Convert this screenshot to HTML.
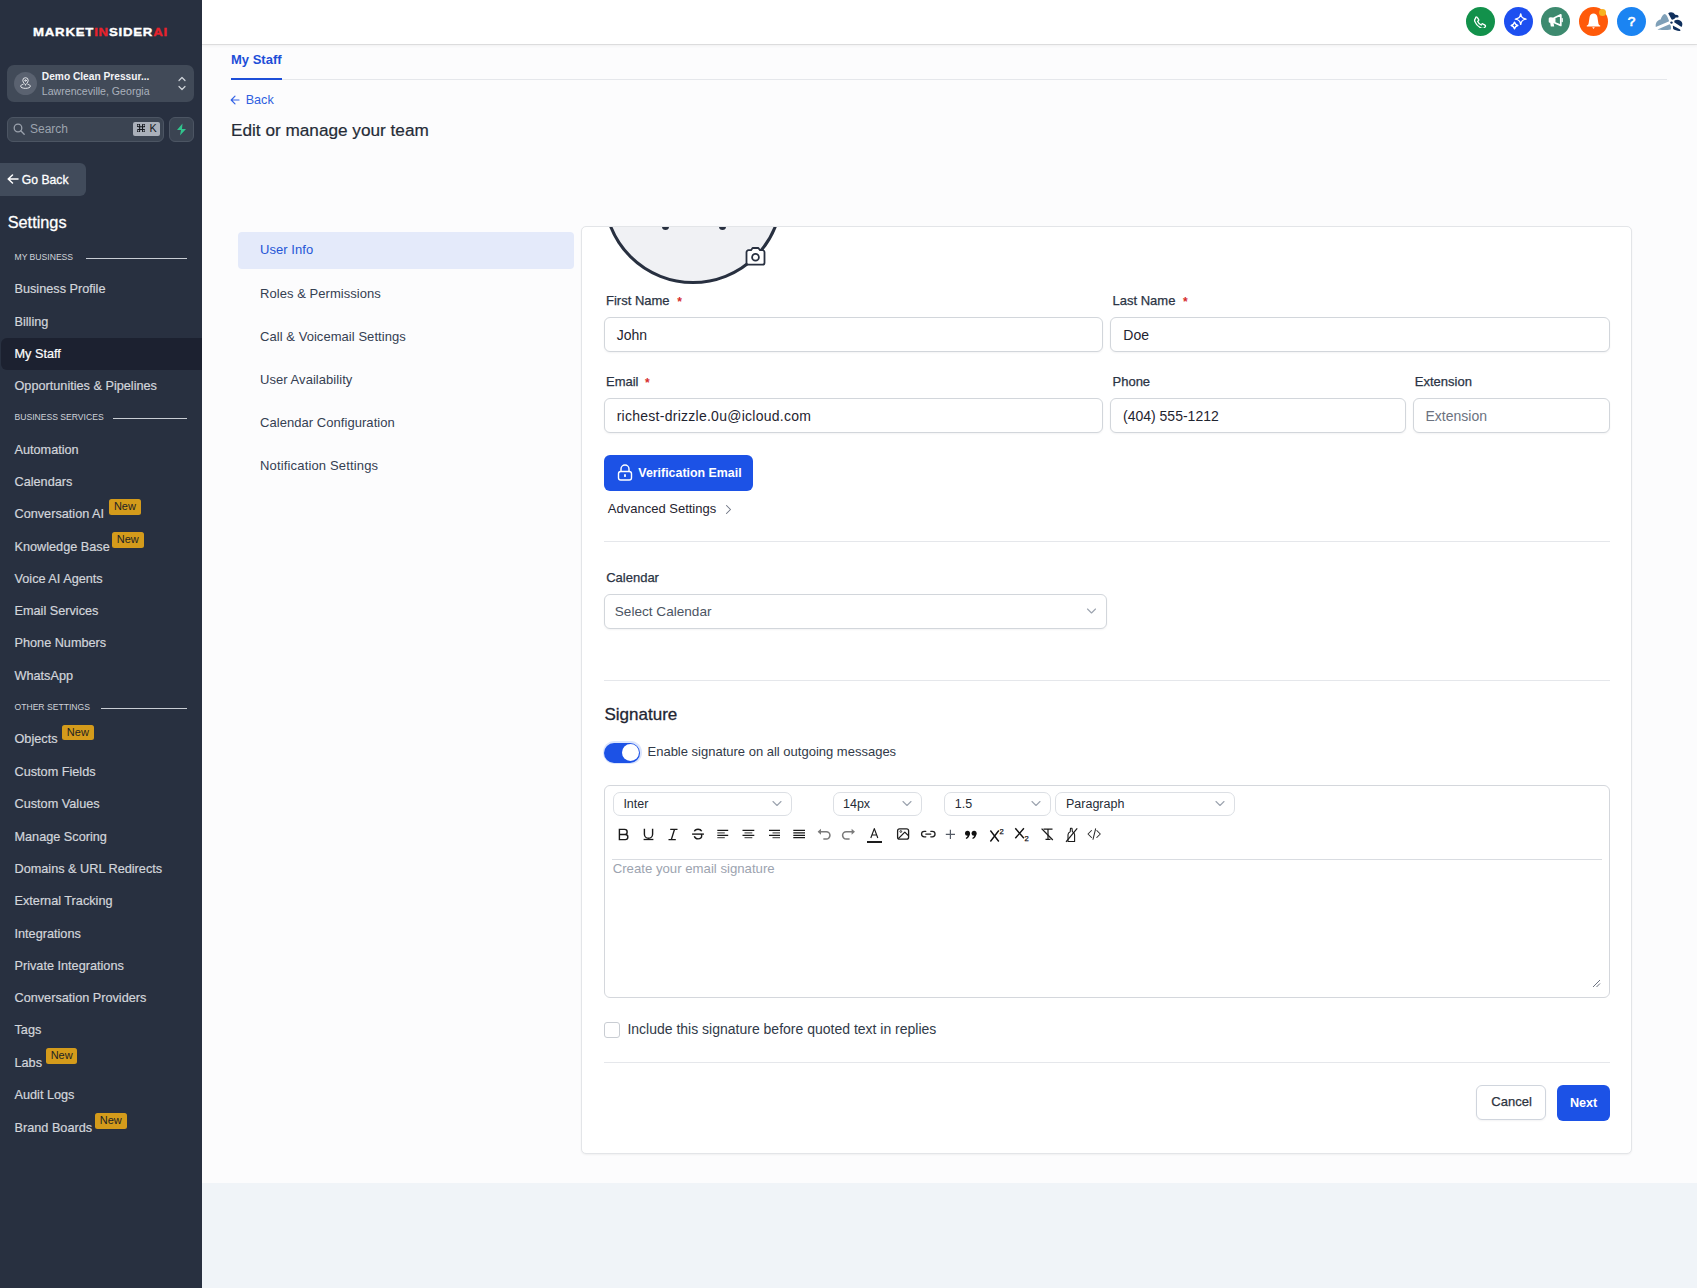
<!DOCTYPE html><html><head><meta charset="utf-8"><style>*{box-sizing:border-box;margin:0;padding:0}
html,body{width:1697px;height:1288px;overflow:hidden;font-family:"Liberation Sans",sans-serif;background:#f9fafb;position:relative}
.a{position:absolute}
.t{position:absolute;white-space:nowrap;line-height:1}
#sb{position:absolute;left:0;top:0;width:202px;height:1288px;background:#283040;overflow:hidden}
.nb{position:absolute;height:15.5px;width:31.5px;background:#d49b1b;border-radius:2.5px;color:#1d1f24;font-size:11px;line-height:15.5px;text-align:center;white-space:nowrap}
#top{position:absolute;left:202px;top:0;width:1495px;height:44px;background:#fff;box-shadow:0 1px 0 rgba(0,0,0,0.09),0 2px 3px rgba(0,0,0,0.05)}
.ic{position:absolute;top:7px;width:29px;height:29px;border-radius:50%}
.inp{position:absolute;height:35px;background:#fff;border:1px solid #d2d6db;border-radius:6px;box-shadow:0 1px 2px rgba(16,24,40,0.05)}
.hr{position:absolute;height:1px;background:#e5e7eb}
.sel{position:absolute;height:24px;background:#fff;border:1px solid #dcdfe4;border-radius:7px}
</style></head><body><div id="sb"><div class="t" style="left:33px;top:27.0px;font-size:11px;color:#fff;font-weight:bold;letter-spacing:0.65px;transform:scaleX(1.2);transform-origin:0 0;-webkit-text-stroke:0.35px currentColor">MARKET<span style="color:#e8222c;-webkit-text-stroke:0.35px #e8222c">IN</span>SIDER<span style="color:#e8222c;-webkit-text-stroke:0.35px #e8222c">AI</span></div><div class="a" style="left:7px;top:65px;width:187px;height:37px;background:#414a58;border-radius:7px"></div><div class="a" style="left:14px;top:72px;width:23px;height:23px;border-radius:50%;background:#5a6270"></div><svg class="a" style="left:19px;top:77px" width="13" height="13" viewBox="0 0 24 24" fill="none" stroke="#e8eaee" stroke-width="1.8" stroke-linecap="round" stroke-linejoin="round"><path d="M12 14.5s5-4.2 5-8.2a5 5 0 0 0-10 0c0 4 5 8.2 5 8.2z"/><circle cx="12" cy="6.5" r="1.4"/><path d="M7.5 13.5C4.5 14.3 3 15.5 3 17c0 2.2 4 4 9 4s9-1.8 9-4c0-1.5-1.5-2.7-4.5-3.5"/></svg><div class="t" style="left:41.8px;top:72.0px;font-size:10.2px;color:#f3f4f6;font-weight:bold;">Demo Clean Pressur...</div><div class="t" style="left:41.8px;top:86.0px;font-size:10.6px;color:#aab1bc;font-weight:normal;">Lawrenceville, Georgia</div><svg class="a" style="left:177px;top:76px" width="10" height="15" viewBox="0 0 10 15" fill="none" stroke="#d0d4da" stroke-width="1.2" stroke-linecap="round" stroke-linejoin="round"><path d="M2 4.5l3-3 3 3"/><path d="M2 10.5l3 3 3-3"/></svg><div class="a" style="left:7px;top:117px;width:157px;height:25px;background:#3b4452;border:1px solid #4c5563;border-radius:6px"></div><svg class="a" style="left:13px;top:123px" width="12" height="12" viewBox="0 0 12 12" fill="none" stroke="#9aa1ac" stroke-width="1.3" stroke-linecap="round"><circle cx="5" cy="5" r="3.8"/><path d="M8 8l3.2 3.2"/></svg><div class="t" style="left:30px;top:123.0px;font-size:12px;color:#9ca3ae;font-weight:normal;">Search</div><div class="a" style="left:133px;top:122px;width:27px;height:14px;background:#aab0ba;border-radius:2px"></div><svg class="a" style="left:137.2px;top:123.9px" width="8.2" height="8.2" viewBox="0 0 8 8" fill="none" stroke="#15181e" stroke-width="1"><path d="M1.3 2.6A1.3 1.3 0 1 1 2.6 1.3V6.7A1.3 1.3 0 1 1 1.3 5.4H6.7A1.3 1.3 0 1 1 5.4 6.7V1.3A1.3 1.3 0 1 1 6.7 2.6Z"/></svg><div class="t" style="left:149.6px;top:123.0px;font-size:10.8px;color:#15181e;font-weight:normal;">K</div><div class="a" style="left:169px;top:117px;width:25px;height:25px;background:#3b4452;border:1px solid #4c5563;border-radius:6px"></div><svg class="a" style="left:176px;top:123px" width="11" height="13" viewBox="0 0 11 13"><path d="M6.5 0.5L1 7h4l-1 5.5L10 6H6z" fill="#31c48d"/></svg><div class="a" style="left:-6px;top:163px;width:92px;height:33px;background:#414b5b;border-radius:6px"></div><svg class="a" style="left:7px;top:174px" width="12" height="10" viewBox="0 0 12 10" fill="none" stroke="#fff" stroke-width="1.5" stroke-linecap="round" stroke-linejoin="round"><path d="M11 5H1.5M5.5 1L1.2 5l4.3 4"/></svg><div class="t" style="left:21.8px;top:174.0px;font-size:12.2px;color:#fff;font-weight:normal;-webkit-text-stroke:0.3px currentColor">Go Back</div><div class="t" style="left:7.7px;top:214.0px;font-size:16.3px;color:#fff;font-weight:normal;-webkit-text-stroke:0.3px currentColor">Settings</div><div class="t" style="left:14.5px;top:253.0px;font-size:8.6px;color:#cfd3da;font-weight:normal;">MY BUSINESS</div><div class="a" style="left:86px;top:257.8px;width:101px;height:1.3px;background:#c9cdd4"></div><div class="a" style="left:1px;top:338px;width:201px;height:32px;background:#1c2130;border-radius:6px 0 0 6px"></div><div class="t" style="left:14.5px;top:283.0px;font-size:12.7px;color:#d2d5db;font-weight:normal;-webkit-text-stroke:0.2px currentColor">Business Profile</div><div class="t" style="left:14.5px;top:316.0px;font-size:12.7px;color:#d2d5db;font-weight:normal;-webkit-text-stroke:0.2px currentColor">Billing</div><div class="t" style="left:14.5px;top:348.0px;font-size:12.7px;color:#ffffff;font-weight:normal;-webkit-text-stroke:0.2px currentColor">My Staff</div><div class="t" style="left:14.5px;top:380.0px;font-size:12.7px;color:#d2d5db;font-weight:normal;-webkit-text-stroke:0.2px currentColor">Opportunities &amp; Pipelines</div><div class="t" style="left:14.5px;top:413.0px;font-size:8.6px;color:#cfd3da;font-weight:normal;">BUSINESS SERVICES</div><div class="a" style="left:113px;top:417.6px;width:74px;height:1.3px;background:#c9cdd4"></div><div class="t" style="left:14.5px;top:703.0px;font-size:8.6px;color:#cfd3da;font-weight:normal;">OTHER SETTINGS</div><div class="a" style="left:101px;top:707.9px;width:86px;height:1.3px;background:#c9cdd4"></div><div class="t" style="left:14.5px;top:444.0px;font-size:12.7px;color:#d2d5db;font-weight:normal;-webkit-text-stroke:0.2px currentColor">Automation</div><div class="t" style="left:14.5px;top:476.0px;font-size:12.7px;color:#d2d5db;font-weight:normal;-webkit-text-stroke:0.2px currentColor">Calendars</div><div class="t" style="left:14.5px;top:508.0px;font-size:12.7px;color:#d2d5db;font-weight:normal;-webkit-text-stroke:0.2px currentColor">Conversation AI</div><div class="nb" style="left:109.2px;top:499.2px">New</div><div class="t" style="left:14.5px;top:541.0px;font-size:12.7px;color:#d2d5db;font-weight:normal;-webkit-text-stroke:0.2px currentColor">Knowledge Base</div><div class="nb" style="left:112px;top:532.2px">New</div><div class="t" style="left:14.5px;top:573.0px;font-size:12.7px;color:#d2d5db;font-weight:normal;-webkit-text-stroke:0.2px currentColor">Voice AI Agents</div><div class="t" style="left:14.5px;top:605.0px;font-size:12.7px;color:#d2d5db;font-weight:normal;-webkit-text-stroke:0.2px currentColor">Email Services</div><div class="t" style="left:14.5px;top:637.0px;font-size:12.7px;color:#d2d5db;font-weight:normal;-webkit-text-stroke:0.2px currentColor">Phone Numbers</div><div class="t" style="left:14.5px;top:670.0px;font-size:12.7px;color:#d2d5db;font-weight:normal;-webkit-text-stroke:0.2px currentColor">WhatsApp</div><div class="t" style="left:14.5px;top:733.0px;font-size:12.7px;color:#d2d5db;font-weight:normal;-webkit-text-stroke:0.2px currentColor">Objects</div><div class="nb" style="left:62.1px;top:724.7px">New</div><div class="t" style="left:14.5px;top:766.0px;font-size:12.7px;color:#d2d5db;font-weight:normal;-webkit-text-stroke:0.2px currentColor">Custom Fields</div><div class="t" style="left:14.5px;top:798.0px;font-size:12.7px;color:#d2d5db;font-weight:normal;-webkit-text-stroke:0.2px currentColor">Custom Values</div><div class="t" style="left:14.5px;top:831.0px;font-size:12.7px;color:#d2d5db;font-weight:normal;-webkit-text-stroke:0.2px currentColor">Manage Scoring</div><div class="t" style="left:14.5px;top:863.0px;font-size:12.7px;color:#d2d5db;font-weight:normal;-webkit-text-stroke:0.2px currentColor">Domains &amp; URL Redirects</div><div class="t" style="left:14.5px;top:895.0px;font-size:12.7px;color:#d2d5db;font-weight:normal;-webkit-text-stroke:0.2px currentColor">External Tracking</div><div class="t" style="left:14.5px;top:928.0px;font-size:12.7px;color:#d2d5db;font-weight:normal;-webkit-text-stroke:0.2px currentColor">Integrations</div><div class="t" style="left:14.5px;top:960.0px;font-size:12.7px;color:#d2d5db;font-weight:normal;-webkit-text-stroke:0.2px currentColor">Private Integrations</div><div class="t" style="left:14.5px;top:992.0px;font-size:12.7px;color:#d2d5db;font-weight:normal;-webkit-text-stroke:0.2px currentColor">Conversation Providers</div><div class="t" style="left:14.5px;top:1024.0px;font-size:12.7px;color:#d2d5db;font-weight:normal;-webkit-text-stroke:0.2px currentColor">Tags</div><div class="t" style="left:14.5px;top:1057.0px;font-size:12.7px;color:#d2d5db;font-weight:normal;-webkit-text-stroke:0.2px currentColor">Labs</div><div class="nb" style="left:45.9px;top:1048.2px">New</div><div class="t" style="left:14.5px;top:1089.0px;font-size:12.7px;color:#d2d5db;font-weight:normal;-webkit-text-stroke:0.2px currentColor">Audit Logs</div><div class="t" style="left:14.5px;top:1122.0px;font-size:12.7px;color:#d2d5db;font-weight:normal;-webkit-text-stroke:0.2px currentColor">Brand Boards</div><div class="nb" style="left:95px;top:1113.0px">New</div></div><div class="a" style="left:202px;top:44px;width:1495px;height:1139px;background:#fcfcfd"></div><div class="a" style="left:202px;top:1183px;width:1495px;height:105px;background:#f0f4f8"></div><div id="top"></div><div class="ic" style="left:1466px;background:#12914b"></div><div class="ic" style="left:1504px;background:#1d4ff0"></div><div class="ic" style="left:1541px;background:#3d8a6f"></div><div class="ic" style="left:1579px;background:#ff5a0a"></div><div class="ic" style="left:1617px;background:#1b84f2"></div><svg class="a" style="left:1473.3px;top:15.6px" width="13.6" height="12.75" viewBox="0 0 16 15" fill="none" stroke="#fff" stroke-width="1.55" stroke-linecap="round" stroke-linejoin="round"><path d="M3.2 1.6c.7-.6 1.6-.5 2 .2l1.3 2.1c.4.6.2 1.4-.3 1.8l-.8.6c.8 1.9 2.3 3.5 4.2 4.3l.6-.8c.4-.6 1.2-.7 1.8-.3l2.1 1.3c.7.4.8 1.3.2 2l-.8.9c-.9.9-2.3 1.2-3.4.7C6.6 12.9 3.7 10 2.2 6.4 1.7 5.3 2 3.9 2.9 3z"/></svg><svg class="a" style="left:1500px;top:5px" width="36" height="33" viewBox="0 0 36 33" fill="none" stroke="#fff" stroke-width="1.45" stroke-linejoin="round"><path d="M20.7 8.9C21.2 12.2 22.2 13.4 26 14.1 22.2 14.8 21.2 16 20.7 19.3 20.2 16 19.2 14.8 15.4 14.1 19.2 13.4 20.2 12.2 20.7 8.9z"/><path d="M14.5 17.2C15 19.3 15.7 20 17.8 20.5 15.7 21 15 21.7 14.5 23.8 14 21.7 13.3 21 11.2 20.5 13.3 20 14 19.3 14.5 17.2z"/></svg><svg class="a" style="left:1540px;top:5px" width="30" height="30" viewBox="0 0 30 30"><path d="M10.2 12.4h4.6v5.6h-1.2l.6 3.6h-3.4l-.6-3.6v-5.6z" fill="#fff"/><path d="M9.8 12.6h1.8v5.2H9.8a1.1 1.1 0 0 1-1.1-1.1v-3a1.1 1.1 0 0 1 1.1-1.1z" fill="#fff"/><path d="M14.6 12.8l6.2-3v10.6l-6.2-2.7z" fill="none" stroke="#fff" stroke-width="1.75" stroke-linejoin="round"/><path d="M22.2 13.6v3" stroke="#fff" stroke-width="1.3" stroke-linecap="round"/></svg><svg class="a" style="left:1580px;top:5px" width="28" height="28" viewBox="0 0 28 28" fill="#fff"><path d="M13.5 8.4c-2.1 0-3.5 1.5-3.9 3.5L8.6 18.5c-.3 1.3-1 1.8-1.8 2v.9h13.4v-.9c-.8-.2-1.5-.7-1.8-2l-1-6.6c-.4-2-1.8-3.5-3.9-3.5z"/><path d="M12.2 22.3h2.6l-1.3 1.6z"/></svg><div class="a" style="left:1599px;top:9px;width:7px;height:7px;border-radius:50%;background:#f7b21f"></div><div class="t" style="left:1627.8px;top:15.0px;font-size:13.6px;color:#fff;font-weight:normal;-webkit-text-stroke:0.7px #fff">?</div><svg class="a" style="left:1650px;top:5px" width="40" height="30" viewBox="0 0 40 30">
<path d="M5.8 22C5.2 18.5 7 15.2 10.6 14.6C11.5 11.5 13.2 9 14.8 9C16 9.2 17.5 11 19.2 16.2Z" fill="#7fa0b8"/>
<path d="M7.5 24.6L19.6 19.2C21 20.5 21.5 22.5 20.8 24.5C17 25.2 11 25.2 7.5 24.6Z" fill="#7fa0b8"/>
<path d="M18.2 8.2C19.8 6.6 23.6 6.6 25.2 9.8L27.4 10C28.6 10.3 28.9 11.6 28.2 12.4L25.6 12.6C24.6 14.2 22.8 14.9 21.6 14.6Z" fill="#0f2f5c"/>
<path d="M24.5 15.6c2.6-1.6 6-1 7.4 1.6.8 1.5.4 3.3-.4 4.8l-7.3-4.7z" fill="#0f2f5c"/>
<path d="M22.8 20.4l7.3 4.1.3 1.4c-2.7.3-5.6-.5-7.2-1.8z" fill="#0f2f5c"/>
<circle cx="21.5" cy="17.6" r="1.2" fill="#0f2f5c"/>
</svg><div class="t" style="left:231px;top:53.0px;font-size:13px;color:#1d4ed8;font-weight:bold;">My Staff</div><div class="a" style="left:231px;top:78.8px;width:1436px;height:1px;background:#e5e7eb"></div><div class="a" style="left:231px;top:78px;width:51px;height:2px;background:#1d4ed8"></div><svg class="a" style="left:230px;top:95px" width="10" height="10" viewBox="0 0 10 10" fill="none" stroke="#3463e6" stroke-width="1.2" stroke-linecap="round" stroke-linejoin="round"><path d="M9 5H1.5M5 1.2L1.2 5 5 8.8"/></svg><div class="t" style="left:245.7px;top:94.0px;font-size:12.6px;color:#2f5fe0;font-weight:normal;">Back</div><div class="t" style="left:231px;top:122.0px;font-size:17.2px;color:#252b36;font-weight:normal;-webkit-text-stroke:0.2px currentColor">Edit or manage your team</div><div class="a" style="left:238px;top:232px;width:336px;height:36.5px;background:#e4eafa;border-radius:4px"></div><div class="t" style="left:260px;top:243.0px;font-size:13px;color:#2556d6;font-weight:normal;letter-spacing:0.05px">User Info</div><div class="t" style="left:260px;top:287.0px;font-size:13px;color:#354052;font-weight:normal;letter-spacing:0.05px">Roles &amp; Permissions</div><div class="t" style="left:260px;top:330.0px;font-size:13px;color:#354052;font-weight:normal;letter-spacing:0.05px">Call &amp; Voicemail Settings</div><div class="t" style="left:260px;top:373.0px;font-size:13px;color:#354052;font-weight:normal;letter-spacing:0.05px">User Availability</div><div class="t" style="left:260px;top:416.0px;font-size:13px;color:#354052;font-weight:normal;letter-spacing:0.05px">Calendar Configuration</div><div class="t" style="left:260px;top:459.0px;font-size:13px;color:#354052;font-weight:normal;letter-spacing:0.16px">Notification Settings</div><div class="a" style="left:581px;top:226px;width:1051px;height:928px;background:#fff;border:1px solid #e3e5e8;border-radius:5px;overflow:hidden;box-shadow:0 1px 2px rgba(0,0,0,0.05)"><div class="a" style="left:21px;top:-123.5px;width:180px;height:180px;border-radius:50%;background:#f0f1f4;border:3px solid #283040"></div><div class="a" style="left:80.20000000000005px;top:-1px;width:6.8px;height:3.6px;border-radius:0 0 3.5px 3.5px;background:#283040"></div><div class="a" style="left:137.29999999999995px;top:-1px;width:6.8px;height:3.6px;border-radius:0 0 3.5px 3.5px;background:#283040"></div><svg class="a" style="left:163px;top:20px" width="21" height="20" viewBox="0 0 21 20"><path d="M6 3.2L7.6 1h5.8L15 3.2h2.5a2 2 0 0 1 2 2v10.5a2 2 0 0 1-2 2h-14a2 2 0 0 1-2-2V5.2a2 2 0 0 1 2-2z" fill="#fff" stroke="#283040" stroke-width="1.8" stroke-linejoin="round"/><circle cx="10.5" cy="10.2" r="3.4" fill="none" stroke="#283040" stroke-width="1.8"/></svg></div><div class="t" style="left:606px;top:294.0px;font-size:13px;color:#2b3444;font-weight:normal;-webkit-text-stroke:0.25px currentColor">First Name</div><div class="t" style="left:677.2px;top:296.0px;font-size:12px;color:#d62c2c;font-weight:bold;">*</div><div class="inp" style="left:604px;top:317px;width:499px"></div><div class="t" style="left:616.7px;top:328.0px;font-size:14px;color:#1f2430;font-weight:normal;">John</div><div class="t" style="left:1112.5px;top:294.0px;font-size:13px;color:#2b3444;font-weight:normal;-webkit-text-stroke:0.25px currentColor">Last Name</div><div class="t" style="left:1183px;top:296.0px;font-size:12px;color:#d62c2c;font-weight:bold;">*</div><div class="inp" style="left:1110px;top:317px;width:500px"></div><div class="t" style="left:1123.3px;top:328.0px;font-size:14px;color:#1f2430;font-weight:normal;">Doe</div><div class="t" style="left:606px;top:375.0px;font-size:13px;color:#2b3444;font-weight:normal;-webkit-text-stroke:0.25px currentColor">Email</div><div class="t" style="left:645px;top:377.0px;font-size:12px;color:#d62c2c;font-weight:bold;">*</div><div class="inp" style="left:604px;top:398px;width:499px"></div><div class="t" style="left:616.7px;top:409.0px;font-size:14px;color:#1f2430;font-weight:normal;letter-spacing:0.26px">richest-drizzle.0u@icloud.com</div><div class="t" style="left:1112.5px;top:375.0px;font-size:13px;color:#2b3444;font-weight:normal;-webkit-text-stroke:0.25px currentColor">Phone</div><div class="inp" style="left:1110px;top:398px;width:296px"></div><div class="t" style="left:1123px;top:409.0px;font-size:14px;color:#1f2430;font-weight:normal;">(404) 555-1212</div><div class="t" style="left:1414.8px;top:375.0px;font-size:13px;color:#2b3444;font-weight:normal;-webkit-text-stroke:0.25px currentColor">Extension</div><div class="inp" style="left:1413px;top:398px;width:197px"></div><div class="t" style="left:1425.5px;top:409.0px;font-size:14px;color:#6b7280;font-weight:normal;">Extension</div><div class="a" style="left:604px;top:455px;width:149px;height:36px;background:#1c52e6;border-radius:6px"></div><svg class="a" style="left:617px;top:464px" width="16" height="17" viewBox="0 0 16 17" fill="none" stroke="#fff" stroke-width="1.4" stroke-linejoin="round"><path d="M4 7.5V5a4 4 0 0 1 8 0v2.5"/><rect x="1.5" y="7.5" width="13" height="8.5" rx="2.2"/><path d="M8 11v1.2" stroke-linecap="round" stroke-width="1.8"/></svg><div class="t" style="left:638.3px;top:467.0px;font-size:12.4px;color:#fff;font-weight:bold;">Verification Email</div><div class="t" style="left:607.8px;top:502.0px;font-size:13px;color:#1f2430;font-weight:normal;">Advanced Settings</div><svg class="a" style="left:724px;top:504px" width="9" height="11" viewBox="0 0 9 11" fill="none" stroke="#6b7280" stroke-width="1.05" stroke-linecap="round" stroke-linejoin="round"><path d="M2.5 1.5l4 4-4 4"/></svg><div class="hr" style="left:604px;top:540.5px;width:1006px"></div><div class="t" style="left:606.2px;top:571.0px;font-size:13px;color:#2b3444;font-weight:normal;-webkit-text-stroke:0.25px currentColor">Calendar</div><div class="inp" style="left:604px;top:593.5px;width:503px"></div><div class="t" style="left:614.8px;top:605.0px;font-size:13.6px;color:#4b5563;font-weight:normal;">Select Calendar</div><svg class="a" style="left:1086px;top:607px" width="11" height="8" viewBox="0 0 11 8" fill="none" stroke="#9ca3af" stroke-width="1.1" stroke-linecap="round" stroke-linejoin="round"><path d="M1.5 2l4 4 4-4"/></svg><div class="hr" style="left:604px;top:680px;width:1006px"></div><div class="t" style="left:604.5px;top:706.0px;font-size:17px;color:#1f2633;font-weight:normal;-webkit-text-stroke:0.3px currentColor">Signature</div><div class="a" style="left:602.5px;top:741px;width:39px;height:22.5px;border-radius:12px;background:#dbe5fd"></div><div class="a" style="left:604px;top:743px;width:36px;height:19.5px;border-radius:10px;background:#1c52e6"></div><div class="a" style="left:621.5px;top:744.2px;width:17.2px;height:17.2px;border-radius:50%;background:#fff"></div><div class="t" style="left:647.5px;top:745.0px;font-size:13px;color:#313a48;font-weight:normal;">Enable signature on all outgoing messages</div><div class="a" style="left:604px;top:784.5px;width:1006px;height:213px;border:1px solid #d4d7dc;border-radius:6px;background:#fff"></div><div class="sel" style="left:612.5px;top:792.3px;width:179px"></div><div class="t" style="left:623.4px;top:798.0px;font-size:12.5px;color:#262c36;font-weight:normal;">Inter</div><svg class="a" style="left:771.5px;top:800px" width="10" height="7" viewBox="0 0 10 7" fill="none" stroke="#9ca3af" stroke-width="1.1" stroke-linecap="round" stroke-linejoin="round"><path d="M1 1.5l4 4 4-4"/></svg><div class="sel" style="left:832.5px;top:792.3px;width:89.5px"></div><div class="t" style="left:843px;top:798.0px;font-size:12.5px;color:#262c36;font-weight:normal;">14px</div><svg class="a" style="left:901.5px;top:800px" width="10" height="7" viewBox="0 0 10 7" fill="none" stroke="#9ca3af" stroke-width="1.1" stroke-linecap="round" stroke-linejoin="round"><path d="M1 1.5l4 4 4-4"/></svg><div class="sel" style="left:944.3px;top:792.3px;width:107px"></div><div class="t" style="left:954.8px;top:798.0px;font-size:12.5px;color:#262c36;font-weight:normal;">1.5</div><svg class="a" style="left:1031px;top:800px" width="10" height="7" viewBox="0 0 10 7" fill="none" stroke="#9ca3af" stroke-width="1.1" stroke-linecap="round" stroke-linejoin="round"><path d="M1 1.5l4 4 4-4"/></svg><div class="sel" style="left:1055px;top:792.3px;width:180px"></div><div class="t" style="left:1066px;top:798.0px;font-size:12.5px;color:#262c36;font-weight:normal;">Paragraph</div><svg class="a" style="left:1214.5px;top:800px" width="10" height="7" viewBox="0 0 10 7" fill="none" stroke="#9ca3af" stroke-width="1.1" stroke-linecap="round" stroke-linejoin="round"><path d="M1 1.5l4 4 4-4"/></svg><div class="hr" style="left:612px;top:859px;width:990px;background:#d9dce1"></div><div class="t" style="left:612.7px;top:862.0px;font-size:13.2px;color:#9ca3af;font-weight:normal;">Create your email signature</div><svg class="a" style="left:1591px;top:978px" width="10" height="10" viewBox="0 0 10 10" stroke="#6b7280" stroke-width="1"><path d="M2 9L9 2M5.5 9L9 5.5"/></svg><svg class="a" style="left:600px;top:820px" width="520" height="26" viewBox="0 0 520 26" fill="none" stroke-linecap="butt">
<g stroke="#1a1a1a" stroke-width="1.4">
<path d="M19.4 9.4h5.2a2.55 2.55 0 0 1 0 5.1h-5.2zM19.4 14.5h5.9a2.55 2.55 0 0 1 0 5.1h-5.9z"/>
<path d="M44.4 8.8v5.4a4.1 4.1 0 0 0 8.2 0V8.8"/>
<path d="M43.6 19.5h9.8" stroke-width="1.3"/>
<path d="M70.2 9.4h7.3M68.5 19.6h7.3M74.5 9.4l-3.2 10.2"/>
<path d="M101.7 11.3c-.6-1.3-1.9-2-3.7-2s-3.2.8-3.6 2.1M94.3 16.3c.5 1.6 1.8 2.6 3.7 2.6 2.2 0 3.7-1.2 3.7-3.1 0-.7-.2-1.3-.5-1.8"/>
<path d="M92.1 14.1h11.8"/>
</g>
<g stroke="#1a1a1a" stroke-width="1.3">
<path d="M117.3 10.4h10.9M117.3 15.3h10.9"/>
<path d="M142.5 10.4h11.8M142.5 15.3h11.8"/>
<path d="M169 10.4h11M169 15.3h11"/>
<path d="M193.3 10.4h11.7M193.3 12.8h11.7M193.3 15.3h11.7M193.3 17.7h11.7"/>
</g>
<g stroke="#5a5a5a" stroke-width="1.3">
<path d="M117.3 12.8h7.5M117.3 17.7h7.5"/>
<path d="M144.5 12.8h7.8M144.5 17.7h7.8"/>
<path d="M172.5 12.8h7.5M172.5 17.7h7.5"/>
</g>
<g stroke="#7a7a7a" stroke-width="1.55" stroke-linecap="round" fill="none">
<path d="M220 11.7h6.3a3.65 3.65 0 0 1 0 7.3h-2.4"/>
<path d="M252.4 11.7h-6.15a3.65 3.65 0 0 0 0 7.3h2.8"/>
</g>
<path d="M217.6 11.7l3.4-3v6z" fill="#7a7a7a"/>
<path d="M255 11.7l-3.4-3v6z" fill="#7a7a7a"/>
<path d="M270.8 18l3.5-9.4 3.5 9.4M271.9 15h4.8" stroke="#1a1a1a" stroke-width="1.15" stroke-linejoin="round"/>
<path d="M267 22h15" stroke="#111" stroke-width="1.9"/>
<g stroke="#1f1f1f" stroke-width="1.3" stroke-linejoin="round">
<rect x="297.6" y="8.8" width="11" height="10.4" rx="2"/>
<path d="M298.3 18.6l6.5-6.5 3.8 3.8"/>
<circle cx="300.8" cy="11.5" r="0.9" stroke-width="0.9"/>
<path d="M325.8 11.3h-1.5a2.75 2.75 0 0 0 0 5.5h1.5M330.8 11.3h1.5a2.75 2.75 0 0 1 0 5.5h-1.5M325.8 14.05h5" stroke-linecap="round"/>
</g>
<path d="M350.4 9.8v9.2M345.8 14.4h9.2" stroke="#555b66" stroke-width="1.2"/>
<g fill="#111">
<circle cx="367.5" cy="13.2" r="2.5"/><path d="M369.8 13.5c0 2.6-1.4 4.6-3.6 5.5l-.5-.9c1.3-.8 2-1.8 2-3z"/>
<circle cx="374.1" cy="13.2" r="2.5"/><path d="M376.4 13.5c0 2.6-1.4 4.6-3.6 5.5l-.5-.9c1.3-.8 2-1.8 2-3z"/>
</g>
<g stroke="#111" stroke-width="1.4">
<path d="M390.4 10.5l8.4 11M398.8 10.5l-8.4 11"/>
<path d="M415.3 8.3l8.6 10M423.9 8.3l-8.6 10"/>
</g>
<text x="399.6" y="13.6" font-family="Liberation Sans" font-size="7.6" fill="#111" stroke="#111" stroke-width="0.25">2</text>
<text x="424.4" y="21" font-family="Liberation Sans" font-size="7.6" fill="#111" stroke="#111" stroke-width="0.25">2</text>
<g stroke="#1a1a1a" stroke-width="1.2">
<path d="M443.5 9.2h9M448 9.2v10.2M445.5 19.4h5"/>
<path d="M441.6 8.6l11.2 11.4" stroke-width="1.3"/>
</g>
<g stroke="#1a1a1a" stroke-width="1.1" stroke-linejoin="round">
<path d="M468 21.5V14.7c0-1.5 1-2.5 2.2-3l.3-3.4h1.5l.4 3.4c1.3.5 2.2 1.5 2.2 3v6.8z"/>
<path d="M466 21.8l11.2-13.4" stroke-width="1.2"/>
</g>
<g stroke="#2b2b2b" stroke-width="1.05" stroke-linecap="round" stroke-linejoin="round">
<path d="M491.5 10.5L488 14l3.5 3.5M496.8 10.5l3.5 3.5-3.5 3.5M495.6 8.8l-2.6 10.5"/>
</g>
</svg><div class="a" style="left:604px;top:1022px;width:15.5px;height:15.5px;border:1px solid #c9cdd3;border-radius:3px;background:#fff"></div><div class="t" style="left:627.4px;top:1022.0px;font-size:14px;color:#313a48;font-weight:normal;">Include this signature before quoted text in replies</div><div class="hr" style="left:604px;top:1062px;width:1006px"></div><div class="a" style="left:1476px;top:1084.5px;width:70px;height:35.5px;border:1px solid #d0d5dd;border-radius:6px;background:#fff;box-shadow:0 1px 2px rgba(16,24,40,.05)"></div><div class="t" style="left:1491.3px;top:1095.0px;font-size:13px;color:#2d3440;font-weight:bold;font-weight:normal;-webkit-text-stroke:0.25px #2d3440">Cancel</div><div class="a" style="left:1557px;top:1085px;width:53px;height:35.5px;background:#1c52e6;border-radius:6px"></div><div class="t" style="left:1569.9px;top:1097.0px;font-size:12.6px;color:#fff;font-weight:bold;">Next</div></body></html>
